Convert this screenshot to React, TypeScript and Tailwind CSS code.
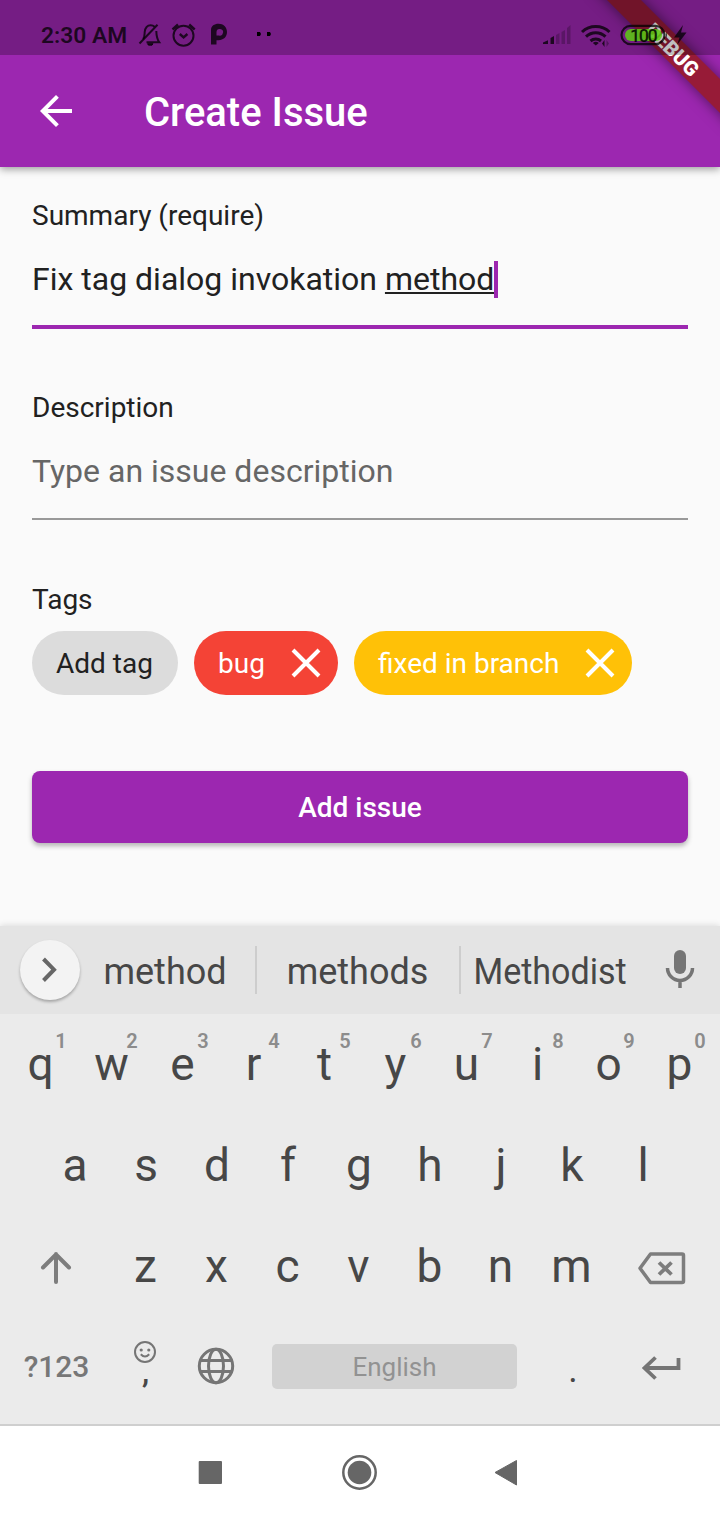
import type { ReactNode } from "react";

function StatusBar() {
  return (
    <div className="absolute inset-x-0 top-0 z-20 flex h-[55px] items-start bg-black/25 pt-[20px] pl-[41px] text-black/75">
      <span className="w-[86px] shrink-0 pt-[1px] whitespace-nowrap text-[22.800px] leading-[30px] font-semibold">2:30 AM</span>
      <svg className="ml-[11px] h-[30px] w-[136px] shrink-0" viewBox="138 20 136 30" fill="none" stroke="currentColor" strokeWidth="2">
        <path d="M143 39c1.800-2 1.500-4.500 1.700-7 .5-4.300 2.800-6.800 6-6.800 1.500 0 2.800.5 3.900 1.500M156.300 31c.1 5 .3 7.500 3 11.300H146.500" />
        <path d="M139.500 43.500 157.500 24.700" />
        <path d="M147.500 43.700h5.500l-1 1.500h-3.500z" fill="currentColor" strokeWidth="1" />
        <circle cx="183.500" cy="35.700" r="10" />
        <path d="m179.800 34 3.800 3.400 3.800-3.400" strokeWidth="2.400" />
        <path d="m172.500 29.500 5.500-5M194.700 29.500l-5.500-5" strokeWidth="2.400" />
        <path d="M211 44.500V30c0-4 3.300-6.200 7.500-6.200 5 0 8.500 3.400 8.500 8.200s-3.500 8.200-8.500 8.200h-2v4.300zM216.500 35.500h2.500a3.300 3.300 0 1 0-2.500-3.300z" fill="currentColor" fillRule="evenodd" stroke="none" />
        <path d="M257 32h3l1 2-1 2h-3zM267 32h3l1 2-1 2h-3z" fill="#000" stroke="none" />
      </svg>
      <svg className="ml-[269px] h-[30px] w-[68px] shrink-0" viewBox="543 20 68 30" fill="none" stroke="currentColor">
        <path d="M543 44v-1.500l5-2.300V44zM550.500 44v-6l3.500-2v8z" fill="currentColor" stroke="none" />
        <path d="M556 44v-9l3.500-2v11zM561.500 44V32l3.500-2v14zM567 44V28l3.500-3v19z" fill="currentColor" opacity=".3" stroke="none" />
        <path d="M582 32a20 20 0 0 1 27.500 0M586 36.700a14 14 0 0 1 19.500 0M590.500 41a8 8 0 0 1 10.500 0" strokeWidth="3" />
        <path d="M592.800 43q3-2.500 6 0l-3 2.500z" fill="currentColor" stroke="none" />
        <path d="m602 43.500 2.500-3.500v7z" fill="currentColor" stroke="none" />
        <path d="m609 43.500-2.500-3.500v7z" fill="currentColor" opacity=".4" stroke="none" />
      </svg>
      <div className="relative ml-[9px] flex h-[30px] w-[68px] shrink-0">
        <svg className="absolute inset-0 h-[30px] w-[68px]" viewBox="620 20 68 30">
          <rect x="621.500" y="25.800" width="43" height="18.400" rx="9.200" fill="none" stroke="currentColor" strokeWidth="2.200" />
          <rect x="625" y="29" width="37" height="12" rx="6" fill="#5ccc10" opacity=".85" />
          <path d="M666 32q2 3 0 6z" fill="currentColor" />
          <path d="m683 25-9 12.500h5.500L677 45l9.500-12.500H681z" fill="currentColor" />
        </svg>
        <span className="relative ml-[10px] text-[18px] leading-[31px] tracking-[-1.500px] font-medium text-black/85">100</span>
      </div>
    </div>
  );
}

function DebugBanner() {
  return (
    <div className="absolute top-0 right-0 z-10 h-[160px] w-[160px] overflow-hidden">
      <div className="absolute top-[36px] left-[12px] flex h-[24px] w-[200px] rotate-45 items-center justify-center bg-[#971b37] pt-[1px] pl-[3px] text-[20.400px] leading-[24px] font-black text-white shadow-[0_0_14px_rgba(0,0,0,0.5)]">
        DEBUG
      </div>
    </div>
  );
}

function Chip({ label, tone, removable }: { label: string; tone: string; removable?: boolean }) {
  return (
    <div className={`flex h-[64px] items-center rounded-full pl-[24px] text-[28px] whitespace-nowrap ${tone}`}>
      <span className="pt-[2px]">{label}</span>
      {removable && (
        <svg className="ml-auto h-[64px] w-[64px]" viewBox="0 0 64 64" fill="none" stroke="#fff" strokeWidth="4">
          <path d="m19 19 26 26M45 19 19 45" />
        </svg>
      )}
    </div>
  );
}

function Key({ children, hint }: { children: ReactNode; hint?: string }) {
  return (
    <div className="relative flex h-[101px] w-[71px] items-center justify-center text-[46px] leading-[101px]">
      {children}
      {hint && (
        <span className="absolute top-[15px] left-[46px] w-[20px] text-center text-[20px] leading-[24px] font-semibold text-[#8c8c8c]">{hint}</span>
      )}
    </div>
  );
}

const topRow = ["q", "w", "e", "r", "t", "y", "u", "i", "o", "p"];
const middleRow = ["a", "s", "d", "f", "g", "h", "j", "k", "l"];
const bottomRow = ["z", "x", "c", "v", "b", "n", "m"];

function Keyboard() {
  return (
    <section className="h-[500px] shrink-0 bg-[#ebebeb] text-[#474747] shadow-[0_-1px_6px_rgba(0,0,0,0.12)]">
      <div className="flex h-[88px] items-center bg-[#e4e4e4] text-[36px] leading-[86px]">
        <div className="ml-[20px] flex h-[60px] w-[60px] shrink-0 items-center justify-center rounded-full bg-[#f3f3f3] shadow-[0_2px_3px_rgba(0,0,0,0.28)]">
          <svg className="h-[60px] w-[60px]" viewBox="0 0 60 60" fill="none" stroke="#666" strokeWidth="4">
            <path d="m23.500 19 10.500 10.700L23.500 40.500" />
          </svg>
        </div>
        <span className="w-[175px] pt-[4px] pr-[5px] text-center">method</span>
        <i className="h-[48px] w-[2px] bg-[#cdcdcd]" />
        <span className="w-[202px] pt-[4px] pr-[1px] text-center">methods</span>
        <i className="h-[48px] w-[2px] bg-[#cdcdcd]" />
        <span className="flex w-[178px] justify-center pt-[4px]"><span className="block scale-x-[0.945]">Methodist</span></span>
        <svg className="ml-[21px] h-[40px] w-[40px]" viewBox="660 948 40 40">
          <rect x="674" y="948" width="12" height="24" rx="6" fill="#757575" />
          <path d="M667.500 966a12.500 12.500 0 0 0 25 0M680 978v8" fill="none" stroke="#757575" strokeWidth="3.500" />
        </svg>
      </div>
      <div className="flex pl-[5px]">
        {topRow.map((k, i) => <Key key={k} hint={String((i + 1) % 10)}>{k}</Key>)}
      </div>
      <div className="flex pl-[39.500px]">
        {middleRow.map((k) => <Key key={k}>{k}</Key>)}
      </div>
      <div className="flex items-center">
        <svg className="h-[101px] w-[110px]" viewBox="0 0 110 101" fill="none" stroke="#7d7d7d" strokeWidth="4" strokeLinecap="round" strokeLinejoin="round">
          <path d="M56 66V38M43 51.500 56 38.500l13 13" />
        </svg>
        {bottomRow.map((k) => <Key key={k}>{k}</Key>)}
        <svg className="h-[101px] w-[113px]" viewBox="607 1216 113 101" fill="none" stroke="#7d7d7d" strokeWidth="3.500">
          <path d="M650.500 1254H682q1.500 0 1.500 1.500v25.500q0 1.500-1.500 1.500h-31.500L640 1268.200z" strokeLinejoin="round" />
          <path d="m659 1262.500 12.500 12M671.500 1262.500l-12.500 12" strokeWidth="3.800" />
        </svg>
      </div>
      <div className="flex h-[109px] items-start">
        <span className="w-[110px] pt-[26px] pl-[3px] text-center text-[30px] leading-[48px] font-medium text-[#777]">?123</span>
        <div className="flex w-[70px] flex-col items-center pt-[23px]">
          <svg className="h-[24px] w-[24px]" viewBox="0 0 24 24" fill="none" stroke="#757575" strokeWidth="2">
            <circle cx="12" cy="12" r="10" />
            <circle cx="8.200" cy="10" r="1.600" fill="#757575" stroke="none" />
            <circle cx="15.800" cy="10" r="1.600" fill="#757575" stroke="none" />
            <path d="M7.800 14.200q4.200 4.500 8.400 0" />
          </svg>
          <span className="-mt-[10px] pl-[1px] text-[32px] leading-[36px] font-medium">,</span>
        </div>
        <svg className="h-[98px] w-[71px]" viewBox="180 1317 71 98" fill="none" stroke="#757575" strokeWidth="3">
          <circle cx="216" cy="1366" r="16.700" />
          <ellipse cx="216" cy="1366" rx="7.500" ry="16.700" />
          <path d="M200 1360.500h32M200 1371.500h32" />
        </svg>
        <div className="mt-[27px] ml-[21px] h-[45px] w-[245px] rounded-[5px] bg-[#d2d2d2] text-center text-[26px] leading-[46px] text-[#929292]">English</div>
        <span className="mt-[23px] w-[112px] text-center text-[36px] leading-[60px]">.</span>
        <svg className="h-[101px] w-[91px]" viewBox="629 1317 91 101" fill="none" stroke="#757575" strokeWidth="3.800">
          <path d="M678.500 1358v10H645M655.500 1357.500 644.500 1368l11 10.500" />
        </svg>
      </div>
    </section>
  );
}

export default function App() {
  return (
    <div className="relative flex h-[1520px] w-[720px] flex-col overflow-hidden bg-[#fafafa] font-['Roboto',sans-serif] text-[#212121]">
      <StatusBar />
      <DebugBanner />
      <header className="flex h-[167px] shrink-0 items-center bg-[#9c27b0] pt-[55px] pl-[32px] text-white shadow-[0_2px_8px_rgba(0,0,0,0.4)]">
        <svg className="h-[48px] w-[48px]" viewBox="0 0 24 24" fill="currentColor">
          <path d="M20 11H7.830l5.590-5.590L12 4l-8 8 8 8 1.410-1.410L7.830 13H20z" />
        </svg>
        <h1 className="ml-[64px] pt-[3px] text-[40px] leading-[48px] font-medium">Create Issue</h1>
      </header>

      <main className="flex h-[759px] shrink-0 flex-col px-[32px] pt-[29px]">
        <label className="text-[28px] leading-[40px]">Summary (require)</label>
        <div className="mt-[19px] flex h-[74px] items-start border-b-4 border-[#9c27b0] text-[32px] leading-[48px] whitespace-pre">
          <span>Fix tag dialog invokation </span>
          <span className="underline decoration-2 underline-offset-[1.500px]">method</span>
          <i className="mt-[6px] h-[37px] w-[4px] bg-[#9c27b0]" />
        </div>
        <label className="mt-[59px] text-[28px] leading-[40px]">Description</label>
        <div className="mt-[19px] h-[73px] border-b-2 border-[#999] text-[32px] leading-[48px] text-[#666]">Type an issue description</div>
        <label className="mt-[60px] text-[28px] leading-[40px]">Tags</label>
        <div className="mt-[11px] flex gap-[16px]">
          <Chip label="Add tag" tone="w-[146px] bg-[#dcdcdc]" />
          <Chip label="bug" tone="w-[144px] bg-[#f44336] text-white" removable />
          <Chip label="fixed in branch" tone="w-[278px] bg-[#ffc107] text-white" removable />
        </div>
        <button className="mt-[76px] h-[72px] rounded-[8px] bg-[#9c27b0] pt-[2px] text-[28px] font-medium text-white shadow-[0_3px_5px_rgba(0,0,0,0.28)]">Add issue</button>
      </main>

      <Keyboard />

      <nav className="-mt-[2px] h-[96px] shrink-0 border-t-2 border-[#cfcfcf] bg-white">
        <svg className="h-[94px] w-[720px]" viewBox="0 1426 720 94" fill="#666">
          <rect x="198.700" y="1461" width="23.300" height="23" rx="1" />
          <circle cx="359.500" cy="1472.500" r="11.800" />
          <circle cx="359.500" cy="1472.500" r="16.200" fill="none" stroke="#666" strokeWidth="2.500" />
          <path d="M495 1472.500 516.500 1460.500V1485z" stroke="#666" strokeWidth="1" strokeLinejoin="round" />
        </svg>
      </nav>
    </div>
  );
}
